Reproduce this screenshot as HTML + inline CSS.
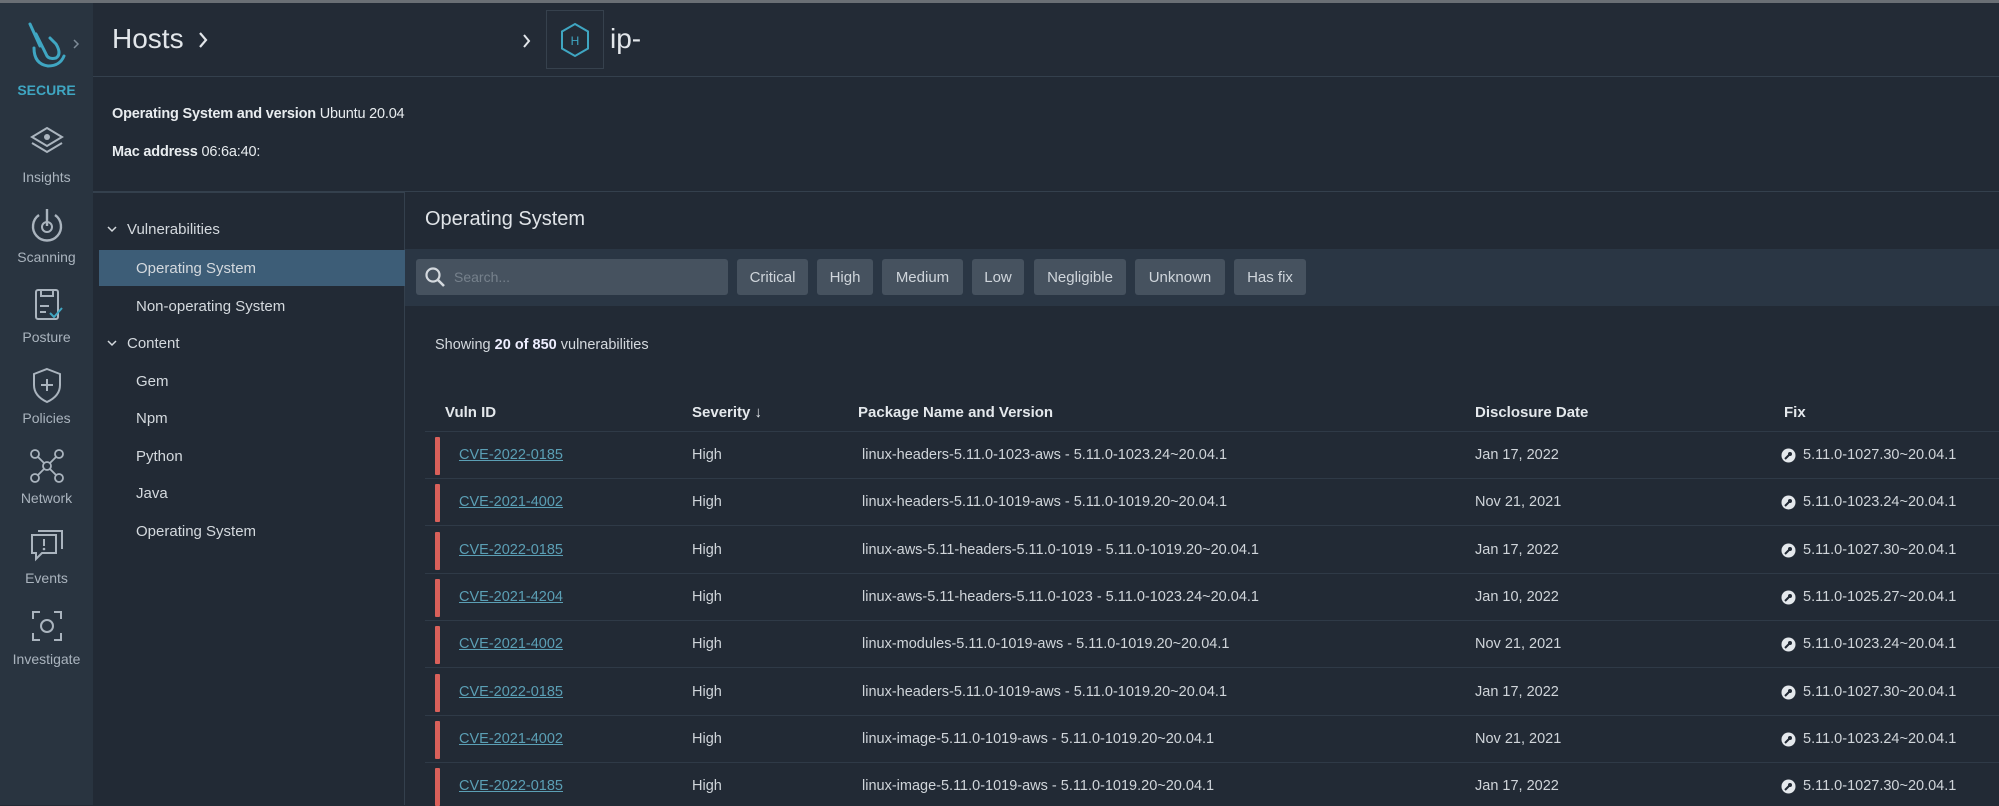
<!DOCTYPE html>
<html><head><meta charset="utf-8"><style>
*{box-sizing:border-box;margin:0;padding:0}
body{width:1999px;height:805px;overflow:hidden;background:#222a35;font-family:"Liberation Sans",sans-serif;color:#d4d9de;position:relative}
.a{position:absolute;white-space:nowrap}
#topline{left:0;top:0;width:1999px;height:3px;background:#6a6f75}
#nav{left:0;top:3px;width:93px;height:802px;background:#293440}
.nl{width:93px;text-align:center;font-size:14px;color:#aab4be}
.ic{left:28px;width:38px;height:38px}
#hdr{left:93px;top:3px;width:1906px;height:74px;border-bottom:1px solid #34404d;background:#232b36}
#side{left:93px;top:192px;width:312px;height:613px;border-right:1px solid #34404d;border-top:1px solid #34404d}
.si{font-size:15px;color:#d4d9de}
#tb{left:405px;top:249px;width:1594px;height:57px;background:#2a3644}
.btn{top:259px;height:36px;background:#46525f;border-radius:3px;font-size:15px;color:#cfd5db;text-align:center;line-height:38px}
.th{top:404px;font-size:15px;font-weight:bold;color:#e4e8ec}
.row{left:425px;width:1574px;height:1px;background:#2f3a47}
.c{font-size:14.5px;color:#d0d5da}
.cve{color:#5b9fb5;text-decoration:underline}
.bar{left:435px;width:5px;height:38px;background:#d9605a;border-radius:1px}
</style></head><body>
<div class="a" id="topline"></div>
<div class="a" id="nav"></div>
<svg class="a" style="left:22px;top:20px" width="60" height="52" viewBox="0 0 60 52"><g fill="none" stroke="#3fa6c2" stroke-width="3" stroke-linecap="round"><path d="M8 4 L18 26"/><path d="M14 14 L24 34 Q26 40 34 38 Q40 34 34 24 L28 18"/><path d="M12 28 Q12 44 26 46 Q38 46 42 36"/></g><path d="M52 20 L56 24 L52 28" fill="none" stroke="#7e8b97" stroke-width="1.5"/></svg>
<div class="a nl" style="left:0;top:82px;font-weight:bold;color:#3fa6c2;font-size:14px">SECURE</div>
<svg class="a ic" style="top:124px" viewBox="0 0 38 38"><g fill="none" stroke="#aab4be" stroke-width="2"><path d="M19 4 L34 13 L19 22 L4 13Z"/><path d="M4 19 L19 28 L34 19"/></g><circle cx="19" cy="13" r="3" fill="#aab4be"/></svg>
<div class="a nl" style="top:169px">Insights</div>
<svg class="a ic" style="top:206px" viewBox="0 0 38 38"><g fill="none" stroke="#aab4be" stroke-width="2.4"><path d="M11 9 A14 14 0 1 0 27 9"/><path d="M19 3 L19 20"/></g><circle cx="19" cy="21" r="5" fill="none" stroke="#aab4be" stroke-width="2"/></svg>
<div class="a nl" style="top:249px">Scanning</div>
<svg class="a ic" style="top:286px" viewBox="0 0 38 38"><g fill="none" stroke="#aab4be" stroke-width="2"><rect x="8" y="4" width="22" height="29" rx="2"/><path d="M13 4 v6 h12 v-6"/><path d="M12 20 h9 M12 26 h6"/><path d="M22 27 l4 4 l8 -9" stroke="#3fa6c2"/></g></svg>
<div class="a nl" style="top:329px">Posture</div>
<svg class="a ic" style="top:366px" viewBox="0 0 38 38"><g fill="none" stroke="#aab4be" stroke-width="2"><path d="M19 3 L32 8 V19 Q32 30 19 36 Q6 30 6 19 V8Z"/><path d="M19 13 v12 M13 19 h12"/></g></svg>
<div class="a nl" style="top:410px">Policies</div>
<svg class="a ic" style="top:447px" viewBox="0 0 38 38"><g fill="none" stroke="#aab4be" stroke-width="1.8"><circle cx="19" cy="19" r="4"/><circle cx="7" cy="7" r="4"/><circle cx="31" cy="7" r="4"/><circle cx="7" cy="31" r="4"/><circle cx="31" cy="31" r="4"/><path d="M10 10 L16 16 M28 10 L22 16 M10 28 L16 22 M28 28 L22 22"/></g></svg>
<div class="a nl" style="top:490px">Network</div>
<svg class="a ic" style="top:527px" viewBox="0 0 38 38"><g fill="none" stroke="#aab4be" stroke-width="2"><path d="M4 8 h24 v18 h-14 l-6 6 v-6 h-4z"/><path d="M10 4 h24 v18"/><path d="M16 12 v7"/></g><circle cx="16" cy="22" r="1.3" fill="#aab4be"/></svg>
<div class="a nl" style="top:570px">Events</div>
<svg class="a ic" style="top:607px" viewBox="0 0 38 38"><g fill="none" stroke="#aab4be" stroke-width="2"><path d="M5 12 V5 h7 M26 5 h7 v7 M33 26 v7 h-7 M12 33 h-7 v-7"/><circle cx="19" cy="19" r="6"/></g></svg>
<div class="a nl" style="top:651px">Investigate</div>

<div class="a" id="hdr"></div>
<div class="a" style="left:112px;top:23px;font-size:28px;color:#e2e6ea">Hosts</div>
<svg class="a" style="left:197px;top:31px" width="12" height="18"><path d="M3 2 L9 9 L3 16" fill="none" stroke="#e2e6ea" stroke-width="2.2"/></svg>
<svg class="a" style="left:521px;top:33px" width="12" height="16"><path d="M3 2 L8 8 L3 14" fill="none" stroke="#e2e6ea" stroke-width="2"/></svg>
<div class="a" style="left:546px;top:10px;width:58px;height:59px;border:1px solid #36414d"></div>
<svg class="a" style="left:558px;top:21px" width="34" height="38" viewBox="0 0 34 38"><path d="M17 3 L30 10.5 V27.5 L17 35 L4 27.5 V10.5Z" fill="none" stroke="#3fa6c2" stroke-width="2"/><text x="17" y="24" text-anchor="middle" font-size="12" fill="#3fa6c2" font-family="Liberation Sans">H</text></svg>
<div class="a" style="left:610px;top:23px;font-size:28px;color:#e2e6ea">ip-</div>

<div class="a" style="left:112px;top:106px;font-size:14.5px;color:#e8ecef;letter-spacing:-0.2px"><b>Operating System and version</b> Ubuntu 20.04</div>
<div class="a" style="left:112px;top:144px;font-size:14.5px;color:#e8ecef;letter-spacing:-0.2px"><b>Mac address</b> 06:6a:40:</div>
<div class="a" style="left:93px;top:191px;width:1906px;height:1px;background:#34404d"></div>

<div class="a" id="side"></div>
<div class="a" style="left:99px;top:250px;width:306px;height:36px;background:#3d5d77"></div>
<svg class="a" style="left:107px;top:226px" width="10" height="8"><path d="M1 1 L5 5 L9 1" fill="none" stroke="#d4d9de" stroke-width="1.5"/></svg>
<div class="a si" style="left:127px;top:221px">Vulnerabilities</div>
<div class="a si" style="left:136px;top:260px">Operating System</div>
<div class="a si" style="left:136px;top:298px">Non-operating System</div>
<svg class="a" style="left:107px;top:340px" width="10" height="8"><path d="M1 1 L5 5 L9 1" fill="none" stroke="#d4d9de" stroke-width="1.5"/></svg>
<div class="a si" style="left:127px;top:335px">Content</div>
<div class="a si" style="left:136px;top:373px">Gem</div>
<div class="a si" style="left:136px;top:410px">Npm</div>
<div class="a si" style="left:136px;top:448px">Python</div>
<div class="a si" style="left:136px;top:485px">Java</div>
<div class="a si" style="left:136px;top:523px">Operating System</div>

<div class="a" style="left:425px;top:208px;font-size:20px;color:#e0e4e8">Operating System</div>
<div class="a" id="tb"></div>
<div class="a" style="left:416px;top:259px;width:312px;height:36px;background:#46525f;border-radius:3px"></div>
<svg class="a" style="left:424px;top:266px" width="22" height="22"><circle cx="9" cy="9" r="6.5" fill="none" stroke="#d4d9de" stroke-width="2.2"/><path d="M13.5 13.5 L20 20" stroke="#d4d9de" stroke-width="2.6"/></svg>
<div class="a" style="left:454px;top:269px;font-size:14px;color:#76818c">Search...</div>
<div class="a btn" style="left:737px;width:71px">Critical</div>
<div class="a btn" style="left:817px;width:56px">High</div>
<div class="a btn" style="left:882px;width:81px">Medium</div>
<div class="a btn" style="left:972px;width:52px">Low</div>
<div class="a btn" style="left:1034px;width:92px">Negligible</div>
<div class="a btn" style="left:1135px;width:90px">Unknown</div>
<div class="a btn" style="left:1234px;width:72px">Has fix</div>

<div class="a" style="left:435px;top:337px;font-size:14.5px;color:#d4d9de">Showing <b style="color:#eef">20 of 850</b> vulnerabilities</div>

<div class="a th" style="left:445px">Vuln ID</div>
<div class="a th" style="left:692px">Severity <span style="font-weight:normal">↓</span></div>
<div class="a th" style="left:858px">Package Name and Version</div>
<div class="a th" style="left:1475px">Disclosure Date</div>
<div class="a th" style="left:1784px">Fix</div>
<div class="a row" style="top:431px"></div>

<div id="rows"></div>
<script>
var d=[["CVE-2022-0185","linux-headers-5.11.0-1023-aws - 5.11.0-1023.24~20.04.1","Jan 17, 2022","5.11.0-1027.30~20.04.1"],
["CVE-2021-4002","linux-headers-5.11.0-1019-aws - 5.11.0-1019.20~20.04.1","Nov 21, 2021","5.11.0-1023.24~20.04.1"],
["CVE-2022-0185","linux-aws-5.11-headers-5.11.0-1019 - 5.11.0-1019.20~20.04.1","Jan 17, 2022","5.11.0-1027.30~20.04.1"],
["CVE-2021-4204","linux-aws-5.11-headers-5.11.0-1023 - 5.11.0-1023.24~20.04.1","Jan 10, 2022","5.11.0-1025.27~20.04.1"],
["CVE-2021-4002","linux-modules-5.11.0-1019-aws - 5.11.0-1019.20~20.04.1","Nov 21, 2021","5.11.0-1023.24~20.04.1"],
["CVE-2022-0185","linux-headers-5.11.0-1019-aws - 5.11.0-1019.20~20.04.1","Jan 17, 2022","5.11.0-1027.30~20.04.1"],
["CVE-2021-4002","linux-image-5.11.0-1019-aws - 5.11.0-1019.20~20.04.1","Nov 21, 2021","5.11.0-1023.24~20.04.1"],
["CVE-2022-0185","linux-image-5.11.0-1019-aws - 5.11.0-1019.20~20.04.1","Jan 17, 2022","5.11.0-1027.30~20.04.1"]];
var h="";
d.forEach(function(r,i){var y=454+i*47.3;
h+='<div class="a bar" style="top:'+(y-17)+'px"></div>';
h+='<div class="a c cve" style="left:459px;top:'+(y-7)+'px">'+r[0]+'</div>';
h+='<div class="a c" style="left:692px;top:'+(y-7)+'px">High</div>';
h+='<div class="a c" style="left:862px;top:'+(y-7)+'px">'+r[1]+'</div>';
h+='<div class="a c" style="left:1475px;top:'+(y-7)+'px">'+r[2]+'</div>';
h+='<svg class="a" style="left:1781px;top:'+(y-6)+'px" width="15" height="15"><circle cx="7.5" cy="7.5" r="7" fill="#e4e8ec"/><path d="M4 11 L8 7" stroke="#222a35" stroke-width="2"/><circle cx="9" cy="6" r="2" fill="#222a35"/></svg>';
h+='<div class="a c" style="left:1803px;top:'+(y-7)+'px">'+r[3]+'</div>';
if(i<7)h+='<div class="a row" style="top:'+(y+24)+'px"></div>';});
document.getElementById("rows").innerHTML=h;
</script>
</body></html>
